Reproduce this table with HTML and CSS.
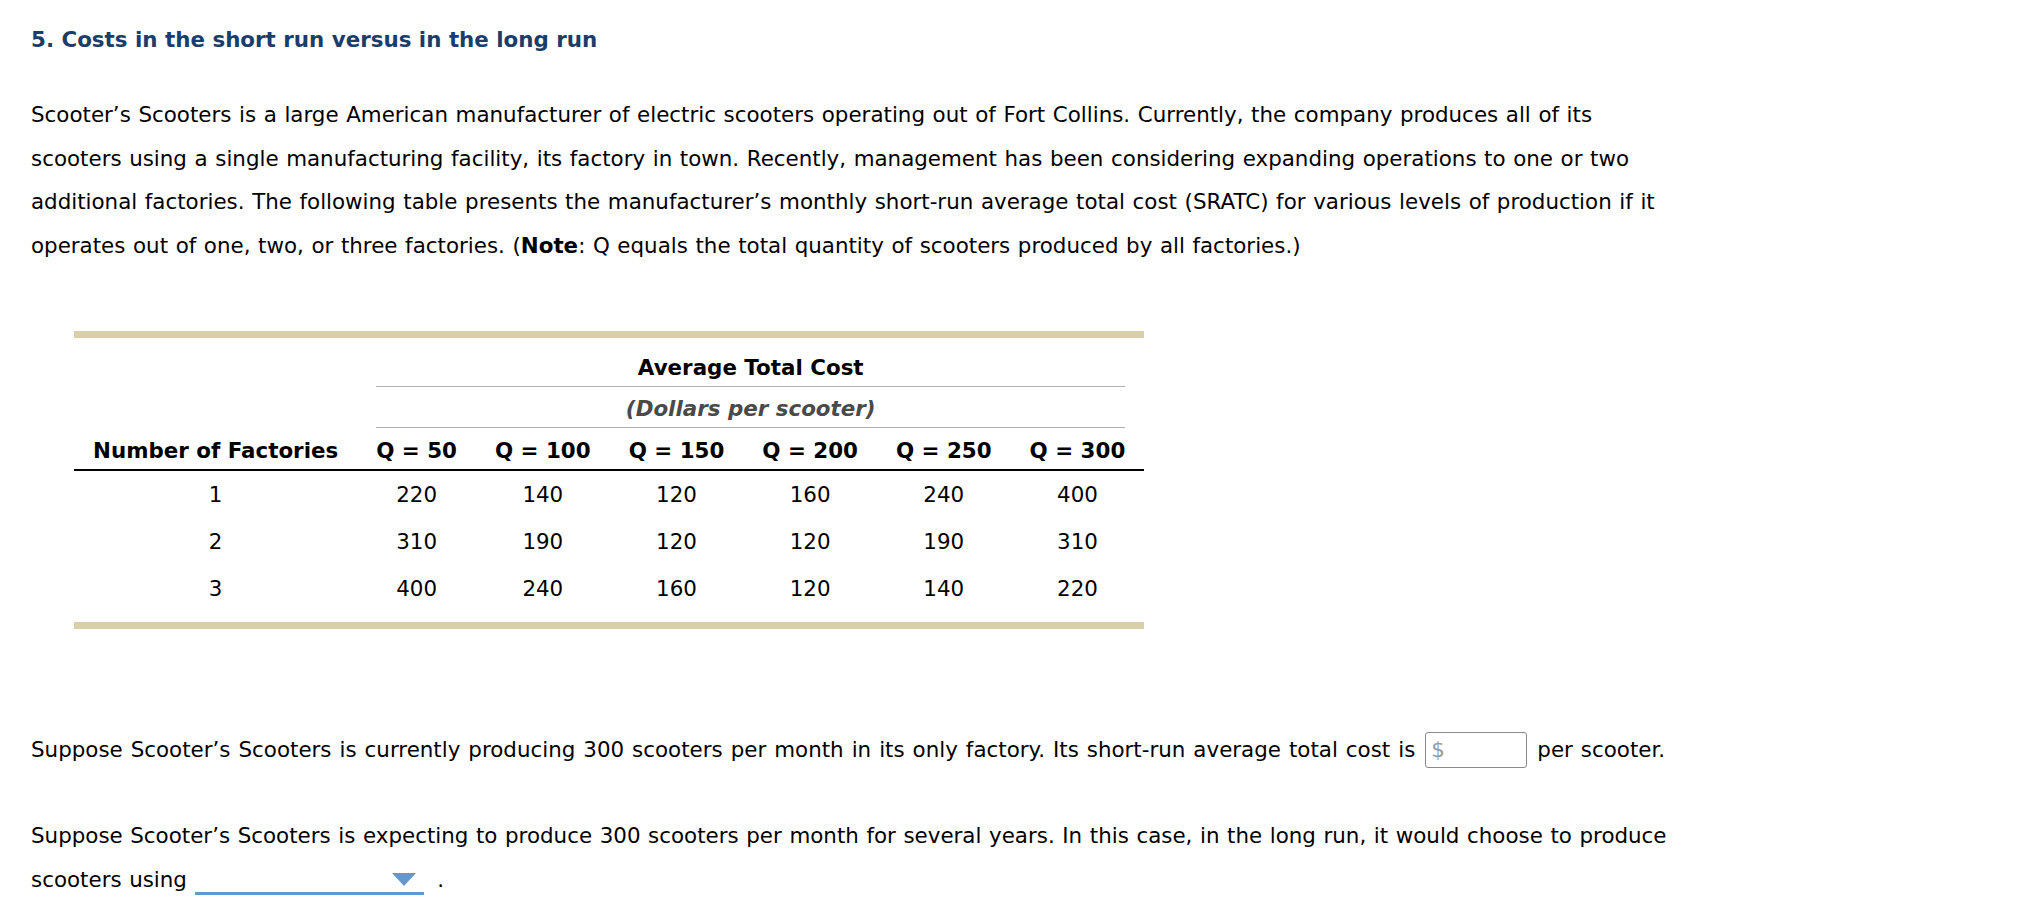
FILE: index.html
```html
<!DOCTYPE html>
<html lang="en">
<head>
<meta charset="utf-8">
<title>Costs in the short run versus in the long run</title>
<link rel="stylesheet" href="styles.css">
</head>
<body>
<div class="page">
  <h2 class="title">5. Costs in the short run versus in the long run</h2>
  <p class="intro">Scooter’s Scooters is a large American manufacturer of electric scooters operating out of Fort Collins. Currently, the company produces all of its scooters using a single manufacturing facility, its factory in town. Recently, management has been considering expanding operations to one or two additional factories. The following table presents the manufacturer’s monthly short-run average total cost (SRATC) for various levels of production if it operates out of one, two, or three factories. (<b>Note</b>: Q equals the total quantity of scooters produced by all factories.)</p>

  <table class="cost">
    <thead>
      <tr class="row-group">
        <th class="blank"></th>
        <th colspan="6" class="span"><div class="span-inner">Average Total Cost</div></th>
      </tr>
      <tr class="row-units">
        <th class="blank"></th>
        <th colspan="6" class="span"><div class="span-inner units">(Dollars per scooter)</div></th>
      </tr>
      <tr class="row-head">
        <th>Number of Factories</th>
        <th>Q = 50</th>
        <th>Q = 100</th>
        <th>Q = 150</th>
        <th>Q = 200</th>
        <th>Q = 250</th>
        <th>Q = 300</th>
      </tr>
    </thead>
    <tbody>
      <tr><td>1</td><td>220</td><td>140</td><td>120</td><td>160</td><td>240</td><td>400</td></tr>
      <tr><td>2</td><td>310</td><td>190</td><td>120</td><td>120</td><td>190</td><td>310</td></tr>
      <tr class="last"><td>3</td><td>400</td><td>240</td><td>160</td><td>120</td><td>140</td><td>220</td></tr>
    </tbody>
  </table>

  <p class="q1">Suppose Scooter’s Scooters is currently producing 300 scooters per month in its only factory. Its short-run average total cost is <span class="answer"><span class="dollar">$</span></span> per scooter.</p>

  <p class="q2">Suppose Scooter’s Scooters is expecting to produce 300 scooters per month for several years. In this case, in the long run, it would choose to produce scooters using <span class="dropdown"><span class="caret"></span></span> .</p>
</div>
</body>
</html>
```
FILE: styles.css
```css
html, body {
  margin: 0;
  padding: 0;
  background: #ffffff;
}

body {
  font-family: "DejaVu Sans", Verdana, sans-serif;
  font-size: 21.4px;
  color: #000000;
}

.page {
  padding: 27px 0 0 31px;
}

.title {
  margin: 0;
  font-size: 21.4px;
  line-height: 26px;
  font-weight: bold;
  color: #1b3d6b;
}

.intro {
  margin: 40px 0 0 0;
  width: 1650px;
  line-height: 43.5px;
  word-spacing: 0.8px;
}

.cost {
  margin: 64px 0 0 43px;
  border-collapse: collapse;
  border-top: 7px solid #d9d0a9;
  border-bottom: 7px solid #d9d0a9;
  font-size: 21.4px;
}

.cost th,
.cost td {
  padding: 0 19px;
  text-align: center;
  white-space: nowrap;
  line-height: 26px;
}

.cost th {
  font-weight: bold;
}

.row-group .span {
  padding-top: 17px;
}

.row-group .span-inner {
  padding-bottom: 5px;
  border-bottom: 1px solid #b0b0b0;
}

.row-units .span {
  padding-top: 9px;
}

.row-units .span-inner {
  padding-bottom: 5px;
  border-bottom: 1px solid #b0b0b0;
}

.units {
  font-style: italic;
  color: #4a4a4a;
}

.row-head th {
  padding-top: 10px;
  padding-bottom: 5px;
  border-bottom: 2px solid #000000;
}

.cost tbody td {
  padding-top: 11px;
  padding-bottom: 10px;
}

.cost tbody tr.last td {
  padding-bottom: 20px;
}

.q1 {
  margin: 99px 0 0 0;
  line-height: 43.5px;
  word-spacing: 1.2px;
}

.answer {
  display: inline-block;
  box-sizing: border-box;
  width: 102px;
  height: 36px;
  border: 1px solid #8a8a8a;
  border-radius: 3px;
  vertical-align: middle;
  line-height: 34px;
  padding-left: 5px;
  margin: -2px 2px 0 2px;
}

.dollar {
  color: #9a9a9a;
}

.q2 {
  margin: 42px 0 0 0;
  width: 1650px;
  line-height: 44px;
  word-spacing: 0.8px;
}

.dropdown {
  display: inline-block;
  position: relative;
  width: 229px;
  height: 24px;
  border-bottom: 3px solid #6897c9;
  vertical-align: -8px;
  margin-right: 6px;
}

.caret {
  position: absolute;
  right: 8px;
  top: 5px;
  width: 0;
  height: 0;
  border-left: 12px solid transparent;
  border-right: 12px solid transparent;
  border-top: 13px solid #6897c9;
}
```
